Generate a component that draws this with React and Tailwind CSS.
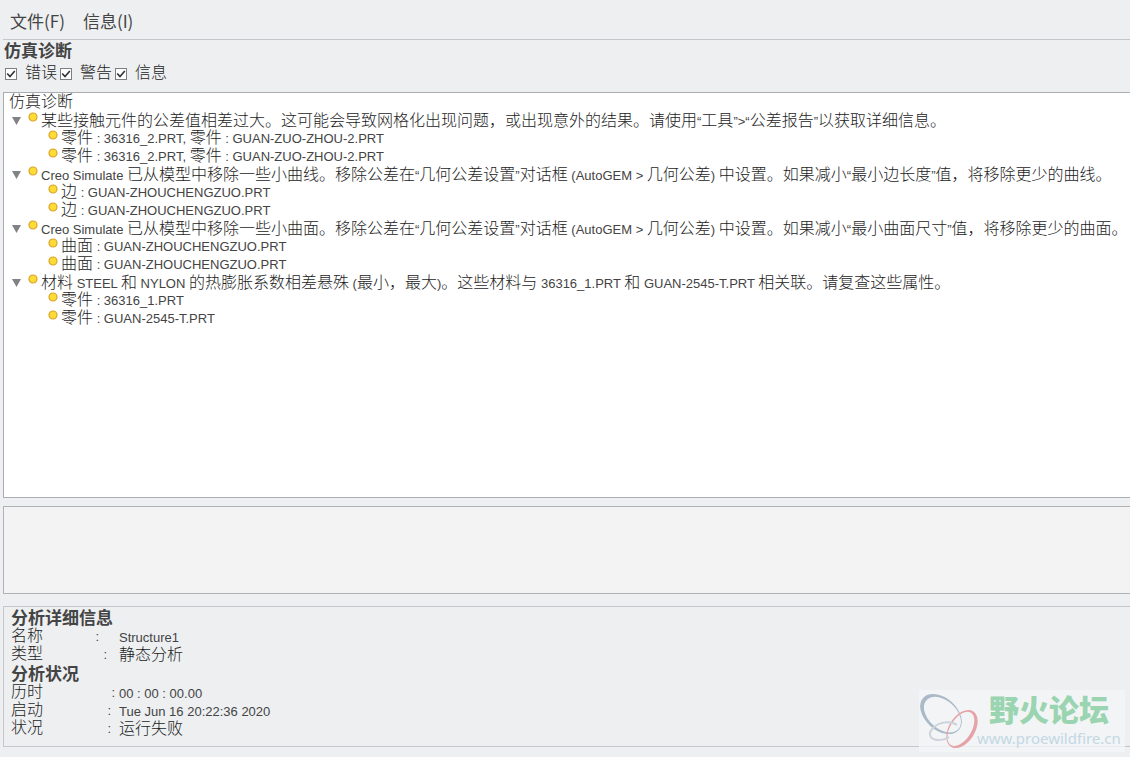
const messages = [
  {
    text: "某些接触元件的公差值相差过大。这可能会导致网格化出现问题，或出现意外的结果。请使用“工具”>“公差报告”以获取详细信息。",
    items: ["零件 : 36316_2.PRT, 零件 : GUAN-ZUO-ZHOU-2.PRT", "零件 : 36316_2.PRT, 零件 : GUAN-ZUO-ZHOU-2.PRT"],
  },
  {
    text: "Creo Simulate 已从模型中移除一些小曲线。移除公差在“几何公差设置”对话框 (AutoGEM > 几何公差) 中设置。如果减小“最小边长度”值，将移除更少的曲线。",
    items: ["边 : GUAN-ZHOUCHENGZUO.PRT", "边 : GUAN-ZHOUCHENGZUO.PRT"],
  },
  {
    text: "Creo Simulate 已从模型中移除一些小曲面。移除公差在“几何公差设置”对话框 (AutoGEM > 几何公差) 中设置。如果减小“最小曲面尺寸”值，将移除更少的曲面。",
    items: ["曲面 : GUAN-ZHOUCHENGZUO.PRT", "曲面 : GUAN-ZHOUCHENGZUO.PRT"],
  },
  {
    text: "材料 STEEL 和 NYLON 的热膨胀系数相差悬殊 (最小，最大)。这些材料与 36316_1.PRT 和 GUAN-2545-T.PRT 相关联。请复查这些属性。",
    items: ["零件 : 36316_1.PRT", "零件 : GUAN-2545-T.PRT"],
  },
];

const details = [
  { label: "名称", value: "Structure1", pad: "pr-5" },
  { label: "类型", value: "静态分析", pad: "pr-3" },
];

const status = [
  { label: "历时", value: "00 : 00 : 00.00", pad: "pr-1" },
  { label: "启动", value: "Tue Jun 16 20:22:36 2020", pad: "pr-2" },
  { label: "状况", value: "运行失败", pad: "pr-2" },
];

// Chinese runs are set larger than the latin text around them
function Mixed({ children }) {
  const parts = children.split(/([\u3000-\u9fff\uff00-\uffef]+)/);
  return (
    <span className="whitespace-pre text-[13px]">
      {parts.map((part, i) =>
        i % 2 ? (
          <span key={i} className="text-base font-light leading-none text-[#1c1c1c]">
            {part}
          </span>
        ) : (
          part
        )
      )}
    </span>
  );
}

function Dot() {
  return (
    <svg viewBox="0 0 10 10" className="mb-2 h-[10px] w-[10px] shrink-0" aria-hidden="true">
      <circle cx="5" cy="5" r="4" fill="#fddc35" stroke="#dba32c" strokeWidth="1.2" />
    </svg>
  );
}

function Filter({ label }) {
  return (
    <label className="flex items-center gap-2">
      <span className="grid">
        <input
          type="checkbox"
          defaultChecked
          className="peer col-start-1 row-start-1 h-3 w-3 appearance-none border border-[#7d7f82] bg-white"
        />
        <svg
          viewBox="0 0 12 12"
          className="pointer-events-none invisible col-start-1 row-start-1 h-3 w-3 peer-checked:visible"
          aria-hidden="true"
        >
          <path d="M2.200 5.500 5 8.600 9.800 3" fill="none" stroke="#333" strokeWidth="1.6" />
        </svg>
      </span>
      <Mixed>{label}</Mixed>
    </label>
  );
}

function Group({ text, items }) {
  return (
    <li>
      <div className="flex h-[18px] items-center">
        <button type="button" aria-label="折叠" className="mr-[7px] flex w-[9px] shrink-0">
          <svg viewBox="0 0 9 8" className="h-2 w-[9px]" aria-hidden="true">
            <path d="M0 0h9L4.500 8z" fill="#808285" />
          </svg>
        </button>
        <Dot />
        <span className="ml-[3px]">
          <Mixed>{text}</Mixed>
        </span>
      </div>
      <ul className="pl-9">
        {items.map((item, i) => (
          <li key={i} className="flex h-[18px] items-center gap-[3px]">
            <Dot />
            <Mixed>{item}</Mixed>
          </li>
        ))}
      </ul>
    </li>
  );
}

function Section({ title, rows }) {
  return (
    <section>
      <h2 className="text-[17px] font-bold leading-[18px]">{title}</h2>
      <dl>
        {rows.map((row) => (
          <div key={row.label} className="flex h-[18px] items-center">
            <dt className={`flex w-[108px] items-center justify-between ${row.pad}`}>
              <Mixed>{row.label}</Mixed>
              <Mixed>:</Mixed>
            </dt>
            <dd>
              <Mixed>{row.value}</Mixed>
            </dd>
          </div>
        ))}
      </dl>
    </section>
  );
}

function Watermark() {
  return (
    <div className="pointer-events-none absolute bottom-[5px] right-[5px] flex h-[62px] w-[206px] bg-[#f3f5f7]/80">
      <svg viewBox="0 0 60 62" className="h-[62px] w-[60px] shrink-0" aria-hidden="true">
        {/* crescent rings: outer ellipse with a shifted inner one cut out */}
        <g fillRule="evenodd">
          <path
            transform="rotate(42 22 24)"
            fill="#a9b9c7"
            d="M-2 24a24 16 0 1 0 48 0a24 16 0 1 0-48 0zM2 23.500a21.500 14 0 1 0 43 0a21.500 14 0 1 0-43 0z"
          />
          <path
            transform="rotate(-58 43 39)"
            fill="#e5a3a8"
            d="M22 39a21 13 0 1 0 42 0a21 13 0 1 0-42 0zM23.500 38a19 10.500 0 1 0 38 0a19 10.500 0 1 0-38 0z"
          />
        </g>
        <path
          d="M38 35C32 30 20 32 14 38C9 43 10 49 18 50C23 50 27 49 30 47"
          fill="none"
          stroke="#ccd3da"
          strokeWidth="2"
        />
      </svg>
      <div className="-ml-[2px] whitespace-nowrap">
        <div className="pl-3 pt-1 text-[30px] font-black leading-[34px] text-[#9ad4b0]">野火论坛</div>
        <div className="font-['Noto_Sans'] text-[15px] leading-5 text-[#c3d8e4]">www.proewildfire.cn</div>
      </div>
    </div>
  );
}

export default function App() {
  return (
    <div className="relative flex min-h-screen flex-col overflow-hidden bg-[#edeff1] pb-[10px] font-['Liberation_Sans','Noto_Sans_CJK_SC',sans-serif] text-[#444]">
      <nav className="ml-[3px] flex h-10 items-center gap-[18px] border-b border-[#c3c6ca] pl-[7px] pt-[2px] font-['Noto_Sans_CJK_SC',sans-serif] text-[17px]">
        <button type="button">文件(F)</button>
        <button type="button">信息(I)</button>
      </nav>

      <h1 className="pl-1 text-[17px] font-bold leading-6">仿真诊断</h1>
      <div className="flex h-[28px] items-start gap-[3px] pl-[5px]">
        <Filter label="错误" />
        <Filter label="警告" />
        <Filter label="信息" />
      </div>

      <main className="ml-[3px] flex-1 border border-r-0 border-[#a9acb0] bg-white pl-2 pt-px">
        <div className="-ml-[3px] flex h-[18px] items-center">
          <Mixed>仿真诊断</Mixed>
        </div>
        <ul>
          {messages.map((message, i) => (
            <Group key={i} {...message} />
          ))}
        </ul>
      </main>

      <div className="ml-[3px] mt-2 h-[88px] border border-r-0 border-[#b0b3b6] bg-[#f3f3f3]" />

      <div className="ml-[3px] mt-3 flex flex-col gap-[2px] border border-r-0 border-[#c3c6ca] pb-2 pl-[7px] pt-[3px]">
        <Section title="分析详细信息" rows={details} />
        <Section title="分析状况" rows={status} />
      </div>

      <Watermark />
    </div>
  );
}
